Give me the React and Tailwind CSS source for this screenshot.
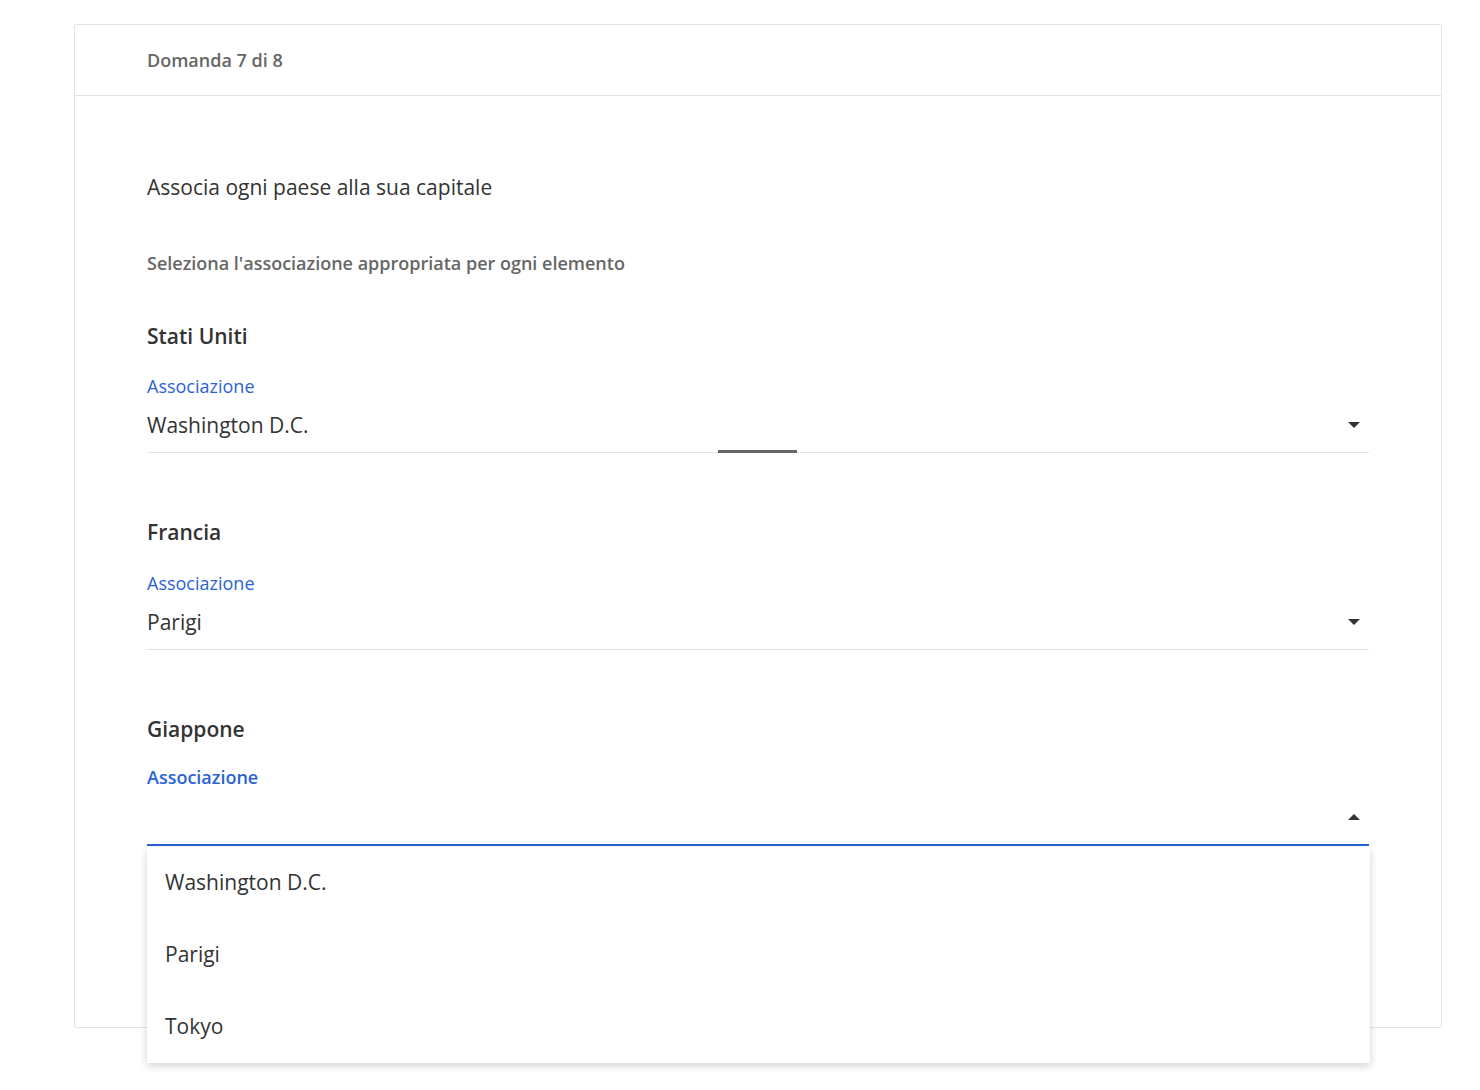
import { useState } from 'react';

const items = [
    { country: 'Stati Uniti', value: 'Washington D.C.', bar: true },
    { country: 'Francia', value: 'Parigi', loose: true },
    { country: 'Giappone', value: '', open: true },
];

const options = ['Washington D.C.', 'Parigi', 'Tokyo'];

const Arrow = ({ up }) => (
    <svg width="12" height="6" viewBox="0 0 12 6" className="absolute right-[9px] top-1/2 -translate-y-1/2">
        {up ? <path d="M0 6 L6 0 L12 6 Z" fill="#333" /> : <path d="M0 0 L6 6 L12 0 Z" fill="#333" />}
    </svg>
);

const MatchField = ({ country, value, open, bar, loose }) => (
    <div className="mt-[65px] first:mt-[47px]">
        <div className="text-[21px] leading-[28px] font-semibold text-[#333]">{country}</div>
        <div
            className={
                'text-[18px] leading-[24px] text-[#2b63d4] ' +
                (open ? 'font-semibold mt-[22px]' : loose ? 'mt-[25px]' : 'mt-[24px]')
            }
        >
            Associazione
        </div>
        <div className="relative">
            <div
                className={
                    'relative flex items-center text-[21px] leading-[28px] text-[#333] ' +
                    (open ? 'h-[57px] border-b-2 border-[#2b63d4]' : 'h-[55px] border-b border-[#e2e2e2]')
                }
            >
                <span>{value}</span>
                <Arrow up={open} />
                {bar && <span className="absolute left-[571px] bottom-[-1px] h-[3px] w-[79px] bg-[#666]" />}
            </div>
            {open && (
                <ul className="absolute left-0 right-[-1px] top-[calc(100%+1px)] z-10 bg-white shadow-[0_3px_8px_rgba(0,0,0,0.18)]">
                    {options.map((o) => (
                        <li key={o} className="h-[72px] flex items-center px-[18px] text-[21px] text-[#333]">
                            {o}
                        </li>
                    ))}
                </ul>
            )}
        </div>
    </div>
);

export default function App() {
    const [answers] = useState(items);

    return (
        <div className="min-h-screen bg-white pt-[24px] pl-[74px] pr-[38px]" style={{ fontFamily: '"Open Sans", "Noto Sans", sans-serif' }}>
            <div className="w-[1368px] border border-[#e3e3e3] rounded-[2px] bg-white">
                <div className="h-[71px] flex items-center px-[72px] border-b border-[#e3e3e3]">
                    <span className="text-[18px] font-semibold text-[#666]">Domanda 7 di 8</span>
                </div>
                <div className="px-[72px] pt-[77px] pb-[181px]">
                    <h2 className="text-[21px] leading-[28px] text-[#333]">Associa ogni paese alla sua capitale</h2>
                    <p className="mt-[50px] text-[18px] leading-[24px] font-semibold text-[#666]">
                        Seleziona l'associazione appropriata per ogni elemento
                    </p>
                    <div>
                        {answers.map((a) => (
                            <MatchField key={a.country} {...a} />
                        ))}
                    </div>
                </div>
            </div>
        </div>
    );
}
